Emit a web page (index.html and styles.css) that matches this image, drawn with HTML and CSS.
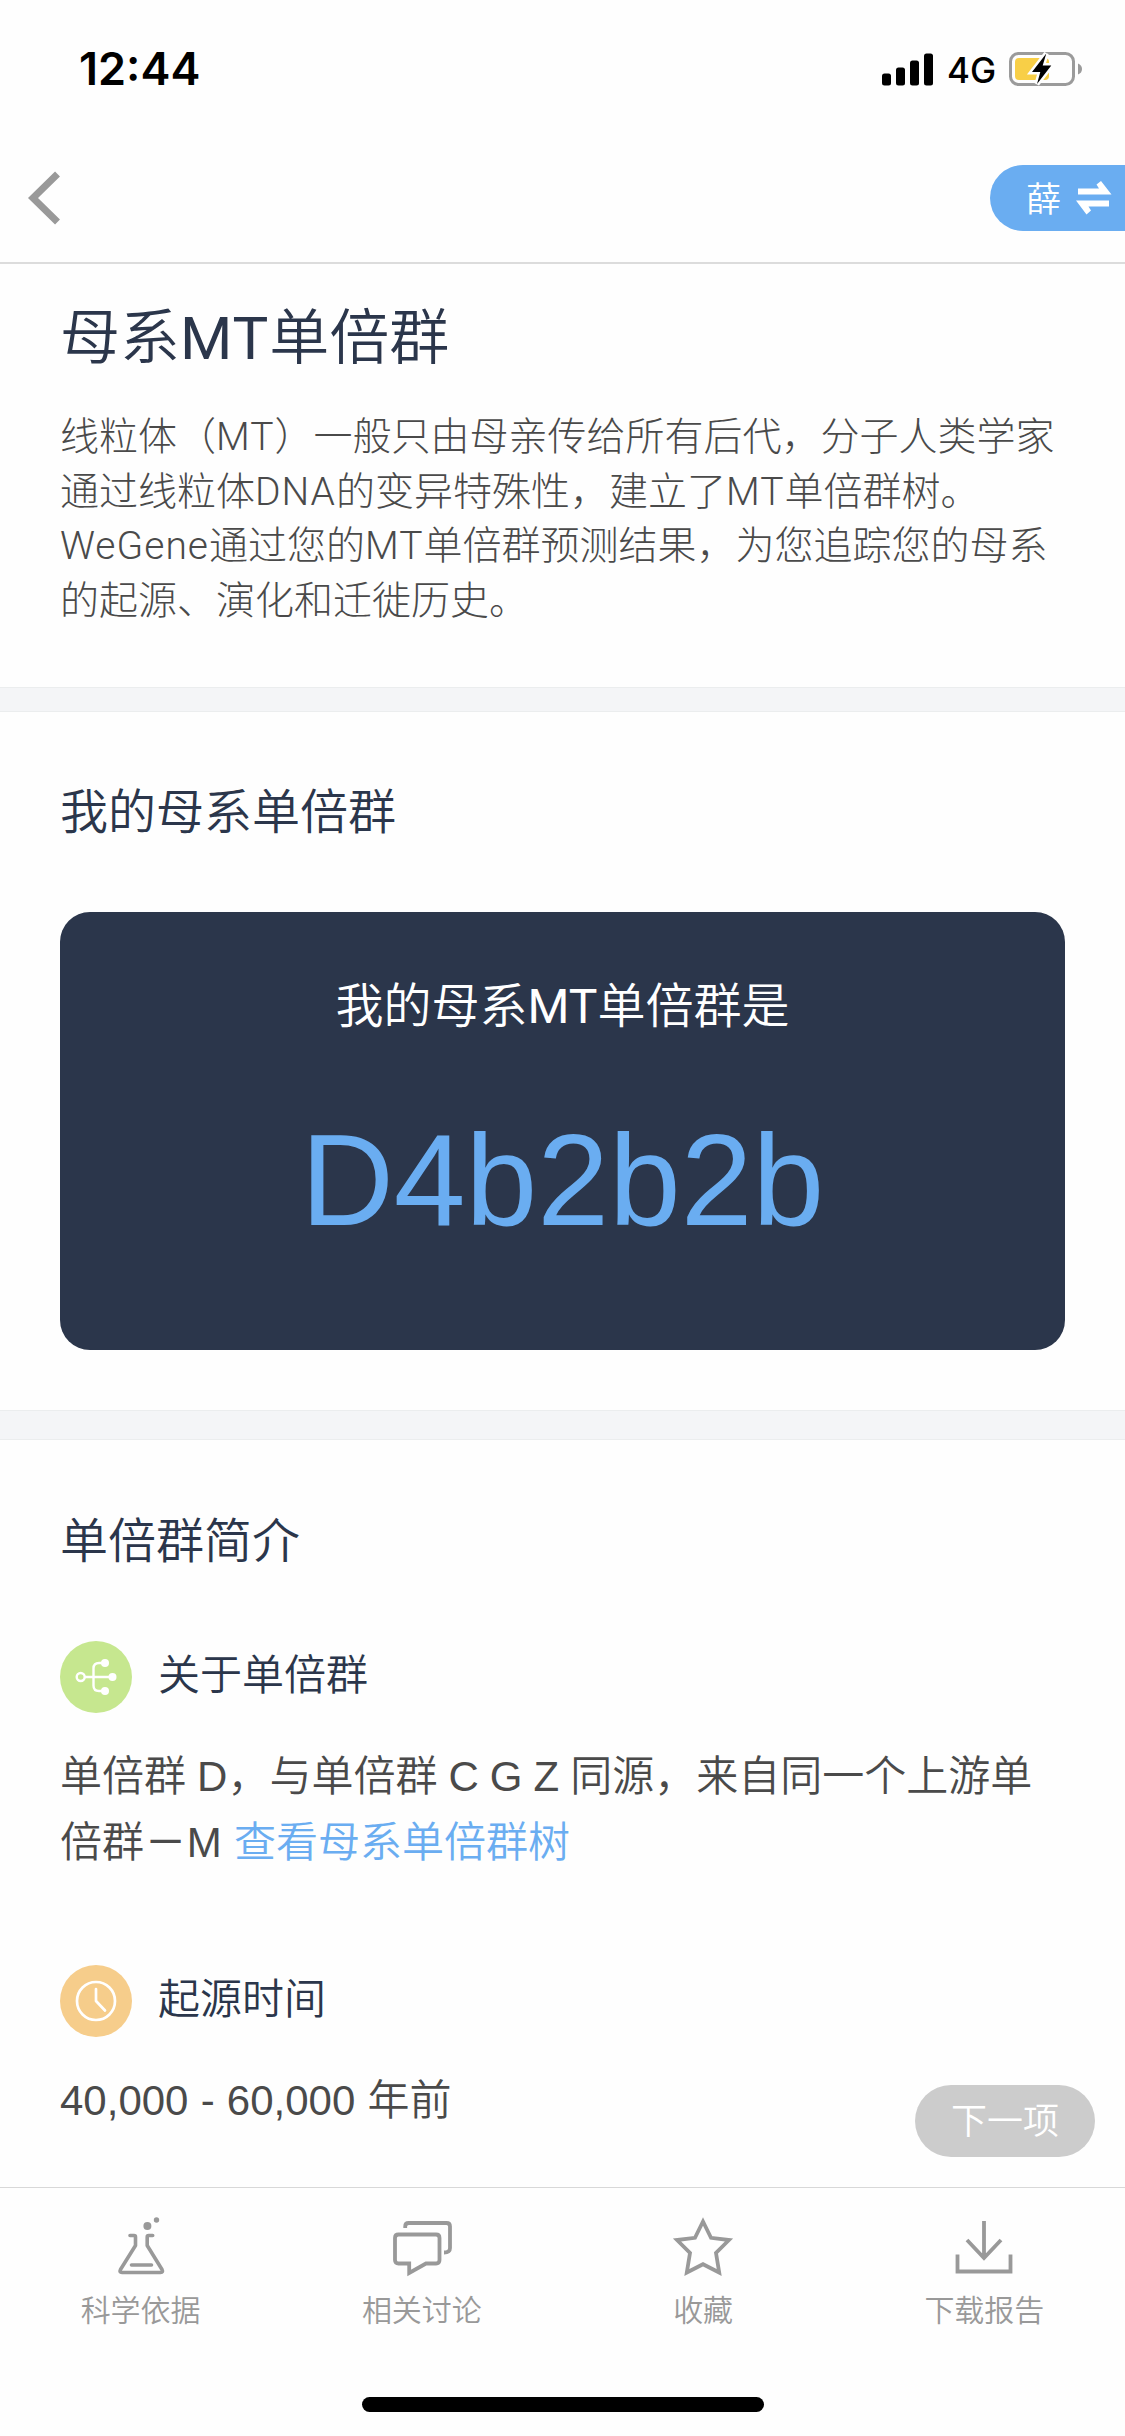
FILE: index.html
```html
<!DOCTYPE html>
<html lang="zh-CN">
<head>
<meta charset="utf-8">
<title>母系MT单倍群</title>
<link rel="stylesheet" href="styles.css">
</head>
<body>
<div class="screen">
  <div class="status">
    <span class="clock">12:44</span>
    <div class="status-right">
      <svg class="signal" width="52" height="34" viewBox="0 0 52 34"><rect x="0" y="20.500" width="9" height="12" rx="2.500"/><rect x="14" y="14.500" width="9" height="18" rx="2.500"/><rect x="28" y="7.500" width="9" height="25" rx="2.500"/><rect x="42" y="0.500" width="9" height="32" rx="2.500"/></svg>
      <span class="net">4G</span>
      <svg class="battery" width="76" height="38" viewBox="0 0 76 38">
        <rect x="1.500" y="3.500" width="63" height="31" rx="8" fill="none" stroke="#9b9b9b" stroke-width="3"/>
        <path d="M69 13.500q4 1.500 4 5.500t-4 5.500z" fill="#9b9b9b"/>
        <rect x="6" y="8" width="34" height="22" rx="4" fill="#f8cf47"/>
        <path d="M37.300 3.500L23 22h8.300L28 34l14.300-18.500h-8.600z" fill="#fff" stroke="#fff" stroke-width="5"/>
        <path d="M37.300 3.500L23 22h8.300L28 34l14.300-18.500h-8.600z" fill="#000"/>
      </svg>
    </div>
  </div>
  <div class="nav">
    <svg class="back" width="32" height="54" viewBox="0 0 32 54"><path d="M28.500 3L4 27l24.500 24" fill="none" stroke="#999" stroke-width="7"/></svg>
    <div class="switch">
      <span>薛</span>
      <svg width="36" height="36" viewBox="0 0 36 36" fill="#fff"><path d="M2 8.500h21L20.500 4.500 25 1l10.500 13.500H2zM0 20.500h33v6H12.500l2.500 4L10.500 34.500z"/></svg>
    </div>
  </div>
  <main>
    <section class="intro">
      <h1>母系<span class="title-latin">MT</span>单倍群</h1>
      <p>线粒体（<span class="latin">MT</span>）一般只由母亲传给所有后代，分子人类学家<br>通过线粒体<span class="latin">DNA</span>的变异特殊性，建立了<span class="latin">MT</span>单倍群树。<br><span class="latin">WeGene</span>通过您的<span class="latin">MT</span>单倍群预测结果，为您追踪您的母系<br>的起源、演化和迁徙历史。</p>
    </section>
    <div class="gap"></div>
    <section class="mine">
      <h2>我的母系单倍群</h2>
      <div class="card">
        <div class="card-label">我的母系<span class="mt">MT</span>单倍群是</div>
        <div class="card-value">D4b2b2b</div>
      </div>
    </section>
    <div class="gap gap-tall"></div>
    <section class="about">
      <h2>单倍群简介</h2>
      <div class="topic">
        <svg width="72" height="72" viewBox="0 0 72 72"><circle cx="36" cy="36" r="36" fill="#c6e78f"/><g fill="none" stroke="#fff" stroke-width="2.400"><circle cx="20.700" cy="36" r="4"/><path d="M25 36h27M44 22h-5q-5.500 0-5.500 5.500v17q0 5.500 5.500 5.500h5"/></g><g fill="#fff"><circle cx="45" cy="22" r="4"/><circle cx="52.500" cy="36" r="4"/><circle cx="45" cy="50" r="4"/></g></svg>
        <h3>关于单倍群</h3>
      </div>
      <p>单倍群 D，与单倍群 C G Z 同源，来自同一个上游单<br>倍群<span class="dash">—</span>M <a>查看母系单倍群树</a></p>
      <div class="topic">
        <svg width="72" height="72" viewBox="0 0 72 72"><circle cx="36" cy="36" r="36" fill="#f6cd8b"/><g fill="none" stroke="#fff" stroke-width="2.700" stroke-linecap="round" stroke-linejoin="round"><circle cx="36" cy="36" r="19"/><path d="M36 24v12l9 9.500"/></g></svg>
        <h3>起源时间</h3>
      </div>
      <p class="years">40,000 - 60,000 年前</p>
    </section>
  </main>
  <div class="next">下一项</div>
  <nav class="tabs">
    <div class="tab"><svg width="60" height="60" viewBox="0 0 60 60" fill="none" stroke="#999" stroke-width="3.600" stroke-linecap="round" stroke-linejoin="round"><path d="M19 19.500h4q1.500 0 1.500 1.500v8.500L9.500 53.500q-1.500 3 1.500 3h38.500q3 0 1.500-3L36.200 29.500V21q0-1.500 1.500-1.500h4M20.500 49h20"/><circle cx="36.400" cy="10" r="4" fill="#999" stroke="none"/><circle cx="45.500" cy="4" r="2.700" fill="#999" stroke="none"/></svg><span>科学依据</span></div>
    <div class="tab"><svg width="60" height="60" viewBox="0 0 60 60" fill="none" stroke="#999" stroke-width="3.800"><path d="M6.500 18.500h37.500q3.500 0 3.500 3.500v22q0 3.500-3.500 3.500H34L17.200 57V47.500H6.500Q3 47.500 3 44V22q0-3.500 3.500-3.500z"/><path d="M13.200 12v-1.500q0-3.500 3.500-3.500H54.500q3.500 0 3.500 3.500V32q0 4.500-6 4.500"/></svg><span>相关讨论</span></div>
    <div class="tab"><svg width="60" height="60" viewBox="0 0 60 60" fill="none" stroke="#999" stroke-width="3.800"><path d="M30 5.500L38 21.800l18 2.200L43 37l3.200 19.500L30 48.200 13.800 56.500 17 37 4 24l18-2.200z"/></svg><span>收藏</span></div>
    <div class="tab"><svg width="60" height="60" viewBox="0 0 60 60" fill="none" stroke="#999" stroke-width="3.800"><path d="M30 5v37M13 24l17 18 17-18M3.500 38.500v17h53v-17"/></svg><span>下载报告</span></div>
  </nav>
  <div class="home"></div>
</div>
</body>
</html>
```
FILE: styles.css
```css
* { box-sizing: border-box; margin: 0; padding: 0; }
body { background: #fefefe; font-family: "Liberation Sans", "Noto Sans CJK SC", sans-serif; font-weight: 350; color: #4a4a4a; }
svg { display: block; flex: none; overflow: visible; }
h1, h2, h3 { font-weight: 350; color: #2b364b; white-space: nowrap; }
p { white-space: nowrap; }
.screen { position: relative; width: 1125px; height: 2436px; display: flex; flex-direction: column; overflow: hidden; }
.status { height: 132px; flex: none; display: flex; justify-content: space-between; padding: 0 43px 0 79px; color: #000; font-family: Inter, sans-serif; }
.clock { font-size: 45px; line-height: 54px; font-weight: 600; margin-top: 42px; }
.status-right { display: flex; margin-top: 50px; height: 38px; align-items: center; }
.signal { margin-top: 2px; }
.net { font-size: 35px; line-height: 38px; font-weight: 450; margin: 2px 0 0 13px; width: 62px; }
.battery { margin-right: -3px; }
.nav { height: 132px; flex: none; display: flex; justify-content: space-between; align-items: center; padding: 2px 0 0 29px; border-bottom: 2px solid #dcdcdc; }
.switch { width: 135px; height: 66px; border-radius: 33px 0 0 33px; background: #6aadf1; color: #fff; display: flex; align-items: center; padding-left: 36px; font-size: 35px; gap: 15px; }
.switch span { margin-top: -3px; }
main { flex: 1; min-height: 0; overflow: hidden; }
.intro { height: 423px; padding: 35px 60px 0; }
.intro h1 { font-family: Roboto, "Noto Sans CJK SC", sans-serif; font-size: 60px; line-height: 80px; }
.title-latin { font-weight: 400; letter-spacing: 1px; }
.intro p { font-family: Roboto, "Noto Sans CJK SC", sans-serif; font-weight: 300; font-size: 39px; line-height: 54.500px; margin-top: 31px; }
.latin { letter-spacing: 1px; }
.mt { font-family: Roboto, sans-serif; font-weight: 400; }
.gap { height: 25px; background: #f4f5f7; border-top: 1px solid #ebedee; border-bottom: 1px solid #ebedee; }
.gap-tall { height: 30px; }
.mine { height: 698px; padding: 69px 60px 0; }
h2 { font-size: 48px; line-height: 64px; }
.card { margin-top: 67px; height: 438px; border-radius: 30px; background: #2b364b; color: #fff; text-align: center; padding-top: 63px; }
.card-label { font-size: 48px; line-height: 64px; }
.card-value { font-size: 129px; line-height: 150px; color: #6aadf1; margin-top: 66px; }
.about { padding: 70px 60px 0; }
.topic { display: flex; align-items: center; gap: 26px; height: 72px; }
.topic h3 { font-size: 42px; line-height: 66px; margin-top: -2px; }
.about h2 + .topic { margin-top: 67px; }
.about p { font-size: 42px; line-height: 66px; margin-top: 31px; word-spacing: -0.600px; }
.about p + .topic { margin-top: 89px; }
.about .years { word-spacing: 0.500px; }
.about a { color: #6aadf1; margin-left: 1px; }
.dash { display: inline-block; font-family: Roboto, sans-serif; font-weight: 400; margin: 0 5px; transform: scaleX(1.100); }
.next { position: absolute; left: 915px; top: 2085px; width: 180px; height: 72px; border-radius: 36px; background: #ccc; color: #fff; font-size: 36px; line-height: 74px; text-align: center; }
.tabs { flex: none; height: 249px; border-top: 1px solid #d8d8d8; display: grid; grid-template-columns: repeat(4, 1fr); padding-top: 28px; }
.tab { display: flex; flex-direction: column; align-items: center; font-size: 30px; line-height: 40px; color: #999; gap: 15px; }
.home { position: absolute; left: 362px; top: 2397px; width: 402px; height: 15px; border-radius: 8px; background: #000; }
```
